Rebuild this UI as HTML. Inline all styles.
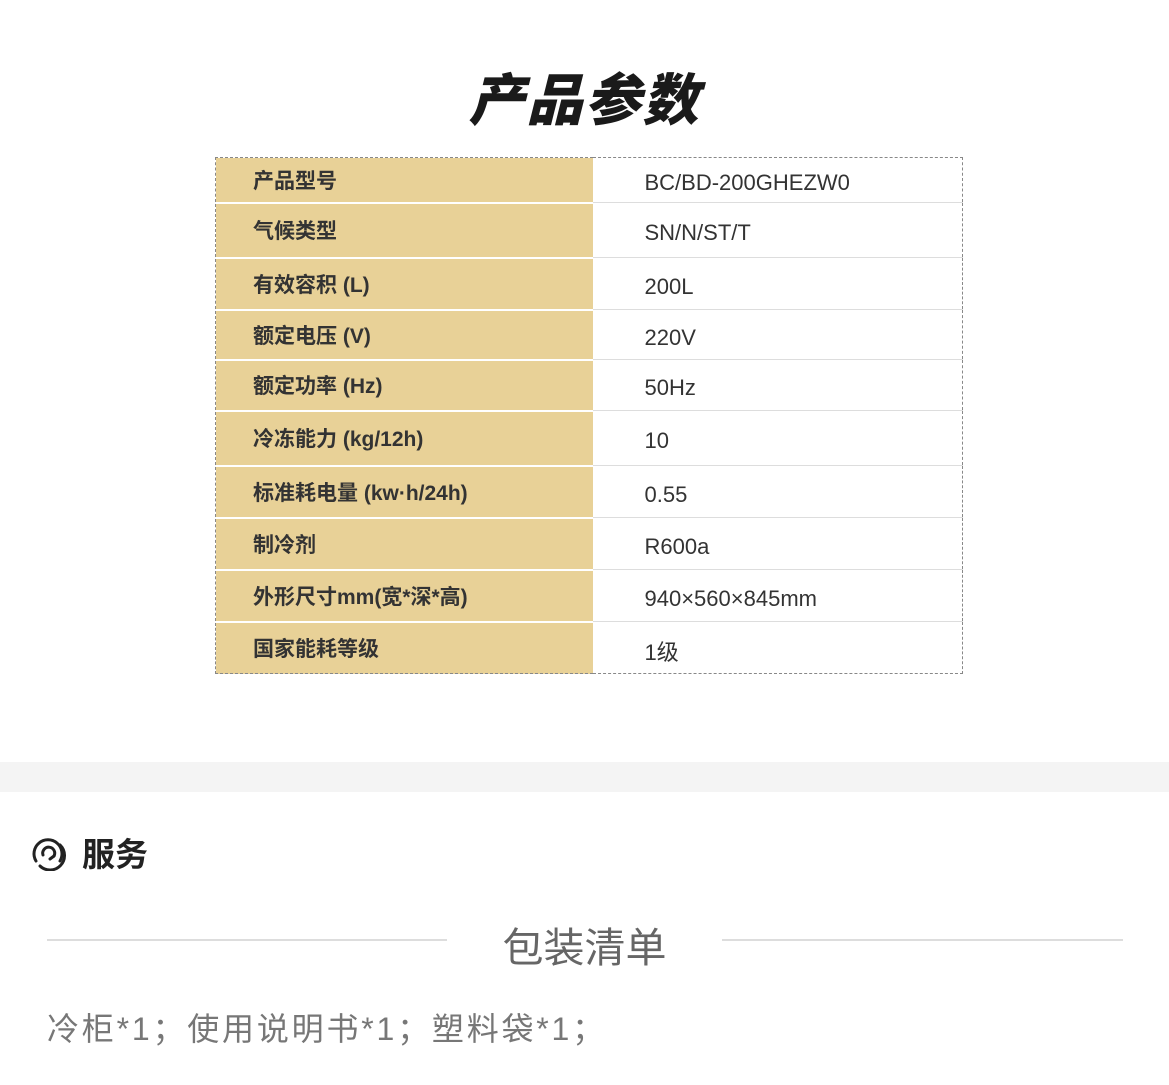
<!DOCTYPE html>
<html><head><meta charset="utf-8"><style>
body{margin:0;width:1169px;height:1085px;background:#fff;font-family:"Liberation Sans","Noto Sans CJK SC",sans-serif;position:relative;overflow:hidden}
.t{position:absolute;left:0;width:1169px;top:56px;text-align:center;font-size:56px;font-weight:900;font-style:italic;color:#1a1a1a;letter-spacing:2px}
table{position:absolute;left:215px;top:157px;width:748px;border-collapse:collapse;border:1.5px dashed #888}
td{padding:0;font-size:21px;color:#222}
td.l{width:377px;background:#e8d197;padding-left:37px;box-sizing:border-box;border-bottom:2px solid #fff;font-weight:bold;color:#333}
td.r{padding-left:52px;border-bottom:1px solid #ddd;padding-top:6px;font-size:22px;color:#333}
.band{position:absolute;left:0;top:762px;width:1169px;height:30px;background:#f4f4f4}
.svc{position:absolute;left:82px;top:828px;font-size:33px;font-weight:bold;color:#222}
.line{position:absolute;top:939px;height:2px;background:#ddd}
.pk{position:absolute;left:0;width:1169px;top:914px;text-align:center;font-size:41px;color:#666}
.it{position:absolute;left:47px;top:1004px;font-size:32px;color:#777;letter-spacing:2.8px}
</style></head><body>
<div class="t">产品参数</div>
<table>
<tr style="height:45px"><td class="l">产品型号</td><td class="r">BC/BD-200GHEZW0</td></tr>
<tr style="height:55px"><td class="l">气候类型</td><td class="r">SN/N/ST/T</td></tr>
<tr style="height:52px"><td class="l">有效容积 (L)</td><td class="r">200L</td></tr>
<tr style="height:50px"><td class="l">额定电压 (V)</td><td class="r">220V</td></tr>
<tr style="height:51px"><td class="l">额定功率 (Hz)</td><td class="r">50Hz</td></tr>
<tr style="height:55px"><td class="l">冷冻能力 (kg/12h)</td><td class="r">10</td></tr>
<tr style="height:52px"><td class="l">标准耗电量 (kw·h/24h)</td><td class="r">0.55</td></tr>
<tr style="height:52px"><td class="l">制冷剂</td><td class="r">R600a</td></tr>
<tr style="height:52px"><td class="l">外形尺寸mm(宽*深*高)</td><td class="r">940×560×845mm</td></tr>
<tr style="height:52px"><td class="l" style="border-bottom:0">国家能耗等级</td><td class="r" style="border-bottom:0">1级</td></tr>
</table>
<div class="band"></div>
<svg style="position:absolute;left:30px;top:835px" width="36" height="36" viewBox="0 0 36 36" fill="none" stroke="#222" stroke-width="3" stroke-linecap="round"><path d="M6 26A14 14 0 1 1 30 26"/><path d="M30 10A14 14 0 0 1 10 31"/><path d="M13 20A6 6 0 1 1 24 21"/><path d="M24 21l-4 3"/></svg>
<div class="svc">服务</div>
<div class="line" style="left:47px;width:400px"></div>
<div class="line" style="left:722px;width:401px"></div>
<div class="pk">包装清单</div>
<div class="it">冷柜*1；使用说明书*1；塑料袋*1；</div>
</body></html>
